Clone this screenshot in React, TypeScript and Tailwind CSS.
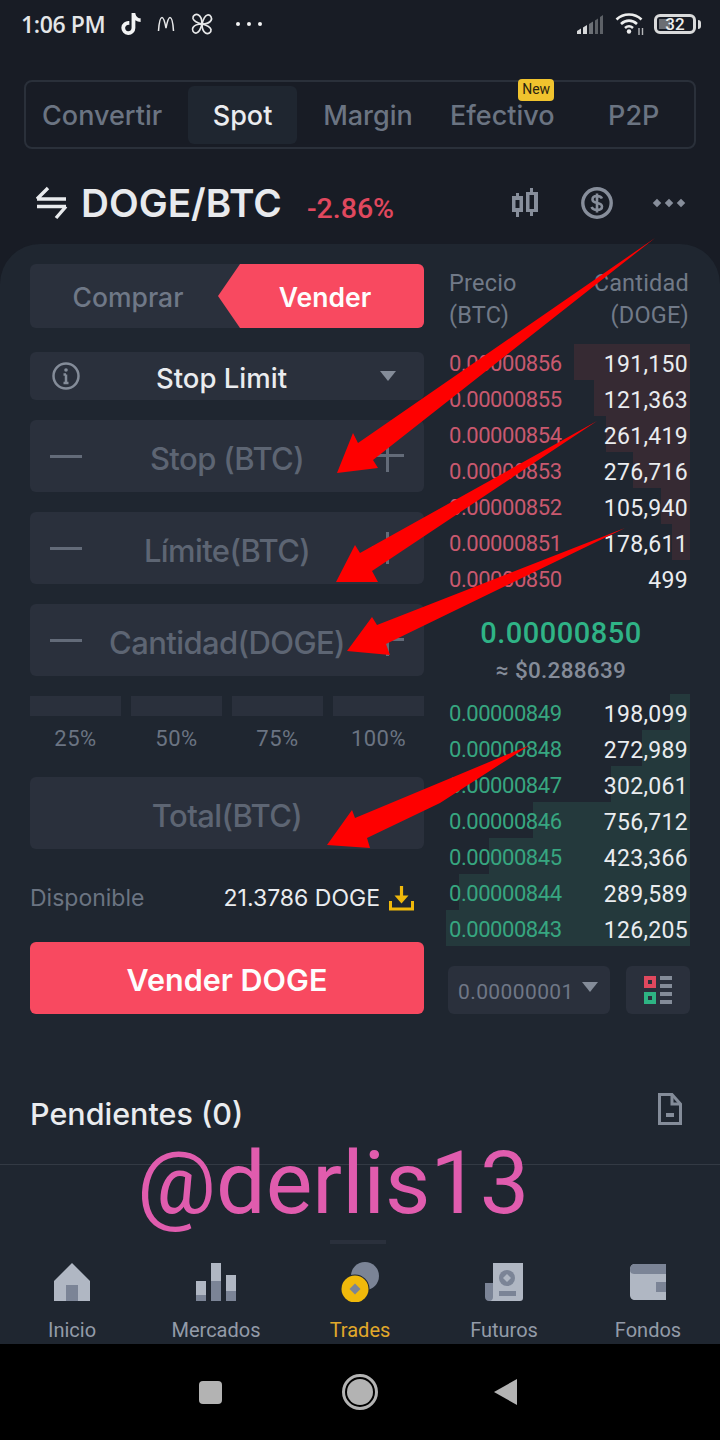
import React from "react";
import { FaTiktok } from "react-icons/fa";

const asks = [
  ["0.00000856", "191,150", 116],
  ["0.00000855", "121,363", 96],
  ["0.00000854", "261,419", 84],
  ["0.00000853", "276,716", 57],
  ["0.00000852", "105,940", 29],
  ["0.00000851", "178,611", 18],
  ["0.00000850", "499", 0],
] as const;
const bids = [
  ["0.00000849", "198,099", 20],
  ["0.00000848", "272,989", 48],
  ["0.00000847", "302,061", 79],
  ["0.00000846", "756,712", 157],
  ["0.00000845", "423,366", 201],
  ["0.00000844", "289,589", 231],
  ["0.00000843", "126,205", 244],
] as const;

function Row({ p, q, w, side }: { p: string; q: string; w: number; side: "a" | "b" }) {
  return (
    <div className="relative flex h-9 items-center justify-between pt-[6px] font-['Roboto',sans-serif] text-[23px]">
      <div
        className={`absolute right-0 top-0 h-full ${side === "a" ? "bg-[#362a33]" : "bg-[#24393c]"}`}
        style={{ width: w }}
      />
      <span className={`relative mb-[3px] ml-px text-[22px] tracking-[-0.45px] ${side === "a" ? "text-[#c9596f]" : "text-[#37a680]"}`}>{p}</span>
      <span className="relative mr-0.5 tracking-[0.3px] text-[#eaecef]">{q}</span>
    </div>
  );
}

function Field({ label, steppers = true }: { label: string; steppers?: boolean }) {
  return (
    <div className="flex h-[72px] items-center justify-between rounded-md bg-[#2a303c] px-5">
      <span className={`h-[3px] w-8 bg-[#636b79] ${steppers ? "" : "invisible"}`} />
      <span className="mt-[6px] text-[31px] font-medium tracking-[-0.6px] text-[#5d6573]">{label}</span>
      <span className={`relative h-8 w-8 ${steppers ? "" : "invisible"}`}>
        <span className="absolute left-0 top-[14px] h-[3px] w-8 bg-[#636b79]" />
        <span className="absolute left-[14px] top-0 h-8 w-[3px] bg-[#636b79]" />
      </span>
    </div>
  );
}

function Tab({ label, active = false, className = "" }: { label: string; active?: boolean; className?: string }) {
  return (
    <div className={`flex h-[58px] items-center justify-center rounded-md pt-1 text-[27px] font-medium ${active ? "bg-[#1f2630] text-[#eaecef]" : "text-[#6b7482]"} ${className}`}>
      {label}
    </div>
  );
}

function NavItem({ label, active = false, children }: { label: string; active?: boolean; children: React.ReactNode }) {
  return (
    <div className="flex w-36 flex-col items-center">
      <div className="flex h-10 items-center justify-center">{children}</div>
      <span className={`mt-4 font-['Roboto',sans-serif] text-[20px] leading-6 ${active ? "text-[#e2a92a]" : "text-[#939ba8]"}`}>{label}</span>
    </div>
  );
}

export default function App() {
  return (
    <div className="relative flex h-[1440px] w-[720px] flex-col overflow-hidden bg-[#181c25] font-['Inter',sans-serif]">
      {/* Status bar */}
      <div className="flex h-[48px] shrink-0 items-center justify-between pl-[21px] pr-[19px]">
        <div className="flex items-center">
          <span className="font-['Open_Sans',sans-serif] text-[23px] font-semibold tracking-[-0.4px] text-[#e4e6e8]">1:06 PM</span>
          <FaTiktok className="ml-[15px] text-[22px] text-[#f2f3f4]" />
          <svg className="ml-[15px]" width="18" height="16" viewBox="0 0 18 16" fill="none" stroke="#e8e9ea" strokeWidth="1.5">
            <path d="M1.5 15C2 7 3.2 1.5 5 1.5C6.6 1.5 8 7 9 12C10 7 11.4 1.5 13 1.5C14.800 1.5 16 7 16.500 15" />
          </svg>
          <svg className="ml-[14px]" width="26" height="26" viewBox="0 0 26 26" fill="none" stroke="#e8e9ea" strokeWidth="1.7">
            <path d="M13 13C9 12 5 11 4 7.500C3.500 4.500 7 2.500 9.500 4C12 5.500 13 9 13 13Z" />
            <path d="M13 13C14 9 15 5 18.500 4C21.500 3.500 23.500 7 22 9.500C20.500 12 17 13 13 13Z" />
            <path d="M13 13C17 14 21 15 22 18.500C22.500 21.500 19 23.500 16.500 22C14 20.500 13 17 13 13Z" />
            <path d="M13 13C12 17 11 21 7.500 22C4.500 22.500 2.500 19 4 16.500C5.500 14 9 13 13 13Z" />
          </svg>
          <div className="ml-[21px] flex gap-[7px]">
            <span className="h-[4px] w-[4px] rounded-full bg-[#f2f3f4]" />
            <span className="h-[4px] w-[4px] rounded-full bg-[#f2f3f4]" />
            <span className="h-[4px] w-[4px] rounded-full bg-[#f2f3f4]" />
          </div>
        </div>
        <div className="flex items-center">
          <svg width="27" height="21" viewBox="0 0 27 21">
            <path d="M0 20V17L4 14.500V20Z" fill="#d6d8da" />
            <path d="M6 20V13.500L10 11V20Z" fill="#d6d8da" />
            <path d="M12 20V10L16 7.500V20Z" fill="#6d7177" />
            <path d="M18 20V6.500L21 4.500V20Z" fill="#5d6167" />
            <path d="M23 20V3L26 1V20Z" fill="#5d6167" />
          </svg>
          <svg className="ml-[11px]" width="30" height="24" viewBox="0 0 30 24" fill="none" stroke="#eceded" strokeWidth="2.6">
            <path d="M1.500 7.500C8.500 .8 19.500 .8 26.500 7.500" />
            <path d="M6 12C10.800 7.500 17.200 7.500 22 12" />
            <path d="M10 16C12.500 13.800 15.500 13.800 18 16" />
            <circle cx="14" cy="19.500" r="2.200" fill="#eceded" stroke="none" />
            <path d="M24 16V23M27.500 16V23" stroke="#b5b7ba" strokeWidth="1.400" />
          </svg>
          <div className="relative ml-[9px] flex h-[20px] w-[42px] items-center justify-center rounded-[6px] border-[3px] border-[#d9dadb] font-['Roboto',sans-serif] text-[17px] font-medium leading-none text-[#eceded]">
            <span className="absolute bottom-[2px] left-[2px] top-[2px] w-[11px] bg-[#6b6e73]" />
            <span className="relative">32</span>
          </div>
          <span className="ml-[2px] h-[9px] w-[3px] rounded-r-sm bg-[#d9dadb]" />
        </div>
      </div>

      {/* Tabs */}
      <div className="mx-6 mt-8 flex h-[69px] shrink-0 items-center rounded-lg border-2 border-[#2a303a] pl-1">
        <Tab label="Convertir" className="mr-[14px] w-[146px]" />
        <Tab label="Spot" active className="w-[110px]" />
        <Tab label="Margin" className="ml-[3px] w-[138px]" />
        <div className="relative ml-[3px] w-[128px]">
          <Tab label="Efectivo" />
          <span className="absolute left-[79px] top-[-7px] flex h-[22px] w-9 items-center justify-center rounded-sm bg-[#f0c32e] font-['Roboto',sans-serif] text-[14px] text-[#2a2410]">New</span>
        </div>
        <Tab label="P2P" className="ml-[8px] w-[122px]" />
      </div>

      {/* Pair header */}
      <div className="ml-9 mr-[35px] mt-[25px] flex h-[58px] shrink-0 items-center">
        <svg width="32" height="34" viewBox="0 0 32 34" fill="none" stroke="#e8eaed" strokeWidth="3.400">
          <path d="M1 13H30M1 13L12 2" />
          <path d="M1 20.500H30M30 20.500L20 32" />
        </svg>
        <span className="ml-[13px] text-[38.700px] font-semibold leading-none text-[#e8eaed]">DOGE/BTC</span>
        <span className="ml-[25px] mt-[12px] font-['Roboto',sans-serif] text-[28.500px] font-medium text-[#e0485e]">-2.86%</span>
        <div className="ml-auto flex items-center">
          <svg width="28" height="30" viewBox="0 0 28 30">
            <path d="M5 5H8V8H12V24H8V29H5V24H1V8H5ZM4.500 12V20H8.500V12Z" fill="#878e9b" fillRule="evenodd" />
            <path d="M19 0H22V4H27V24H22V28H19V24H15V4H19ZM18.500 7V21H23V7Z" fill="#878e9b" fillRule="evenodd" />
          </svg>
          <svg className="ml-[42px]" width="32" height="32" viewBox="0 0 32 32" fill="none">
            <circle cx="16" cy="16" r="14.200" stroke="#878e9b" strokeWidth="3.400" />
            <path d="M21 11.500C20 9.500 18 9 16 9C13.500 9 11.500 10 11.500 12.500C11.500 17.500 21 14.500 21 19.500C21 22 18.500 23 16 23C13.500 23 11.500 22 10.500 20M16 6.500V25.500" stroke="#878e9b" strokeWidth="2.600" />
          </svg>
          <div className="ml-[41px] mr-px flex gap-[6px]">
            <span className="h-[6px] w-[6px] rotate-45 bg-[#878e9b]" />
            <span className="h-[6px] w-[6px] rotate-45 bg-[#878e9b]" />
            <span className="h-[6px] w-[6px] rotate-45 bg-[#878e9b]" />
          </div>
        </div>
      </div>

      {/* Panel */}
      <div className="mt-[12px] flex min-h-0 flex-1 flex-col rounded-t-[40px] bg-[#1f2630]">
        <div className="flex pl-[30px] pr-[30px] pt-5">
          {/* Form */}
          <div className="flex w-[394px] shrink-0 flex-col">
            <div className="flex h-16 rounded-md bg-[#2a303c]">
              <div className="flex w-[188px] items-center justify-center pl-2 pt-1 text-[26.500px] font-medium text-[#6f7887]">Comprar</div>
              <div className="flex w-[206px] items-center justify-center rounded-r-md bg-[#f84960] pl-[8px] pt-1 text-[26.500px] font-semibold text-[#fdfdfd] [clip-path:polygon(22px_0,100%_0,100%_100%,22px_100%,0_50%)]">Vender</div>
            </div>
            <div className="mt-6 flex h-12 items-center justify-between rounded-md bg-[#2a303c] pl-[22px] pr-[28px]">
              <svg width="28" height="28" viewBox="0 0 28 28" fill="none">
                <circle cx="14" cy="14" r="12.500" stroke="#848c99" strokeWidth="2.500" />
                <path d="M14 12.500V21M11.500 12.500H14M11.500 21H16.500" stroke="#848c99" strokeWidth="2.500" />
                <circle cx="14" cy="8" r="1.800" fill="#848c99" />
              </svg>
              <span className="mr-[17px] mt-[6px] text-[27.500px] font-medium text-[#eaecef]">Stop Limit</span>
              <span className="h-0 w-0 border-x-[8px] border-t-[10px] border-x-transparent border-t-[#848c99]" />
            </div>
            <div className="mt-5 flex flex-col gap-5">
              <Field label="Stop (BTC)" />
              <Field label="Límite(BTC)" />
              <Field label="Cantidad(DOGE)" />
            </div>
            <div className="mt-5 grid grid-cols-4 gap-[10px]">
              {["25%", "50%", "75%", "100%"].map((t) => (
                <div key={t} className="flex flex-col items-center">
                  <div className="h-5 w-full bg-[#2a303c]" />
                  <span className="mt-[10px] font-['Roboto',sans-serif] text-[22px] leading-[26px] tracking-[0.5px] text-[#6b7482]">{t}</span>
                </div>
              ))}
            </div>
            <div className="mt-[25px]">
              <Field label="Total(BTC)" steppers={false} />
            </div>
            <div className="mt-8 flex h-[32px] items-center pt-0.5">
              <span className="text-[23px] text-[#6b7482]">Disponible</span>
              <span className="ml-auto text-[23px] text-[#eaecef]">21.3786 DOGE</span>
              <svg className="ml-[9px] mr-[10px]" width="25" height="25" viewBox="0 0 25 25" fill="none">
                <path d="M12.500 0V13" stroke="#f0b90b" strokeWidth="3.200" />
                <path d="M5.500 9.500H19.500L12.500 17.500Z" fill="#f0b90b" />
                <path d="M1.500 15V23H23.500V15" stroke="#f0b90b" strokeWidth="3" />
              </svg>
            </div>
            <div className="mt-[29px] flex h-[72px] items-center justify-center rounded-md bg-[#f84960] pt-1 text-[30.500px] font-semibold text-[#fdfdfd]">Vender DOGE</div>
          </div>

          {/* Order book */}
          <div className="ml-[24px] flex w-[242px] shrink-0 flex-col">
            <div className="flex h-16 justify-between pt-[3px] font-['Roboto',sans-serif] text-[23.500px] leading-8 tracking-[0.2px] text-[#717a88]">
              <div className="ml-px">Precio<br />(BTC)</div>
              <div className="mr-px text-right">Cantidad<br />(DOGE)</div>
            </div>
            <div className="mt-4">
              {asks.map(([p, q, w]) => <Row key={p} p={p} q={q} w={w} side="a" />)}
            </div>
            <div className="flex h-[98px] flex-col items-center pr-4 font-['Roboto',sans-serif]">
              <span className="mt-[19px] text-[29px] font-medium leading-9 tracking-[0.5px] text-[#2fb386]">0.00000850</span>
              <span className="mt-[5px] text-[22.500px] font-medium leading-7 tracking-[0.3px] text-[#858c99]">≈ $0.288639</span>
            </div>
            <div>
              {bids.map(([p, q, w]) => <Row key={p} p={p} q={q} w={w} side="b" />)}
            </div>
            <div className="mt-5 flex h-12 gap-4">
              <div className="flex w-[162px] items-center justify-between rounded-md bg-[#2a303c] pl-[10px] pr-3 pt-[6px] font-['Roboto',sans-serif] text-[21px] tracking-[0.4px] text-[#6f7786]">
                0.00000001
                <span className="mb-[12px] h-0 w-0 border-x-[8px] border-t-[10px] border-x-transparent border-t-[#848c99]" />
              </div>
              <div className="flex w-16 items-center justify-center rounded-md bg-[#2a303c]">
                <svg width="28" height="28" viewBox="0 0 28 28">
                  <rect width="12" height="12" fill="#e0485e" />
                  <rect x="4" y="4" width="4" height="4" fill="#2a303c" />
                  <rect y="16" width="12" height="12" fill="#2eb484" />
                  <rect x="4" y="20" width="4" height="4" fill="#2a303c" />
                  <path d="M16 0H28V4H16ZM16 8H28V12H16ZM16 16H28V20H16ZM16 24H28V28H16Z" fill="#848c99" />
                </svg>
              </div>
            </div>
          </div>
        </div>

        {/* Pendientes */}
        <div className="mt-[74px] flex h-12 items-center justify-between pl-[30px] pr-[38px]">
          <span className="mt-1 text-[30.500px] font-medium text-[#eaecef]">Pendientes (0)</span>
          <svg className="mb-[6px]" width="24" height="32" viewBox="0 0 24 32" fill="none">
            <path d="M1.500 1.500H14L22.500 11V30.500H1.500Z" stroke="#848c99" strokeWidth="3" />
            <path d="M14 2V11H22" stroke="#848c99" strokeWidth="3" />
            <rect x="8" y="20" width="8" height="4" fill="#848c99" />
          </svg>
        </div>
        <div className="mt-7 h-px bg-[#333a44]" />
        <div className="ml-[330px] mt-[75px] h-1 w-14 bg-[#2a303c]" />

        {/* Nav */}
        <div className="mt-[18px] flex">
          <NavItem label="Inicio">
            <svg width="36" height="38" viewBox="0 0 36 38">
              <path d="M18 0L36 18V38H0V18Z" fill="#b0b7c3" />
              <rect x="12" y="22" width="12" height="16" fill="#7b8496" />
            </svg>
          </NavItem>
          <NavItem label="Mercados">
            <svg width="40" height="38" viewBox="0 0 40 38">
              <rect y="18" width="10" height="20" fill="#b0b7c3" />
              <rect y="32" width="10" height="6" fill="#7b8496" />
              <rect x="15" width="10" height="38" fill="#b0b7c3" />
              <rect x="15" y="18" width="10" height="20" fill="#7b8496" />
              <rect x="30" y="12" width="10" height="26" fill="#b0b7c3" />
              <rect x="30" y="28" width="10" height="10" fill="#7b8496" />
            </svg>
          </NavItem>
          <NavItem label="Trades" active>
            <svg width="38" height="40" viewBox="0 0 38 40">
              <circle cx="24" cy="14" r="14" fill="#7b8496" />
              <circle cx="14" cy="27" r="14.500" fill="#1f2630" />
              <circle cx="14" cy="27" r="13.500" fill="#f0b90b" />
              <path d="M14 21.500L19.500 27L14 32.500L8.500 27Z" fill="#7b8496" />
            </svg>
          </NavItem>
          <NavItem label="Futuros">
            <svg width="38" height="38" viewBox="0 0 38 38">
              <path d="M0 20H8V38H4C1.500 38 0 36 0 34Z" fill="#7b8496" />
              <path d="M8 0H38V35C38 37 37 38 35 38H4C7 38 8 36 8 34Z" fill="#b0b7c3" />
              <circle cx="22" cy="15" r="8" fill="#7b8496" />
              <path d="M22 11L26 15L22 19L18 15Z" fill="#b0b7c3" />
              <rect x="14" y="28" width="17" height="5" fill="#7b8496" />
            </svg>
          </NavItem>
          <NavItem label="Fondos">
            <svg width="36" height="36" viewBox="0 0 36 36">
              <path d="M0 6C0 2 2 0 5 0H36V36H5C2 36 0 34 0 31Z" fill="#b0b7c3" />
              <path d="M0 6C0 2 2 0 5 0H36V10H5C2 10 0 9 0 6Z" fill="#7b8496" />
              <rect x="26" y="18" width="10" height="10" fill="#7b8496" />
            </svg>
          </NavItem>
        </div>
      </div>

      {/* Android navigation bar */}
      <div className="flex h-24 shrink-0 items-center bg-black">
        <span className="ml-[199px] h-[23px] w-[23px] rounded-sm bg-[#b3b3b3]" />
        <span className="ml-[120px] flex h-9 w-9 items-center justify-center rounded-full border-[3px] border-[#b3b3b3]">
          <span className="h-[26px] w-[26px] rounded-full bg-[#b3b3b3]" />
        </span>
        <svg className="ml-[116px]" width="24" height="26" viewBox="0 0 24 26"><path d="M23 0V26L0 13Z" fill="#b3b3b3" /></svg>
      </div>

      {/* Annotation arrows painted over the screenshot */}
      <svg className="pointer-events-none absolute left-0 top-0" width="720" height="1440" viewBox="0 0 720 1440">
        <path d="M655 238L358 443L353 433L337 473L378 468L373 460Z" fill="#fe0000" />
        <path d="M597 421L360 553L355 545L336 582L378 582L372 571Z" fill="#fe0000" />
        <path d="M625 528L377 625L372 617L347 651L390 655L386 644Z" fill="#fe0000" />
        <path d="M530 745L355 818L352 810L327 845L370 848L367 838L440 803Z" fill="#fe0000" />
      </svg>
      <span className="pointer-events-none absolute left-[137px] top-[1133px] font-['Roboto',sans-serif] text-[88px] leading-[100px] text-[#e05cae]">@derlis13</span>
    </div>
  );
}
